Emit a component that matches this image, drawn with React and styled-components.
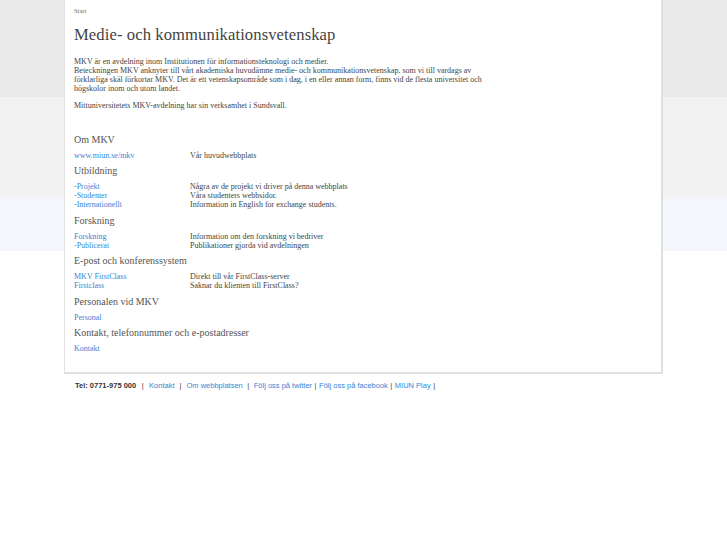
import React from "react";
import styled, { createGlobalStyle } from "styled-components";

const Global = createGlobalStyle`
  html, body { margin: 0; padding: 0; background: #fff; }
  body { font-family: "Liberation Serif", "Times New Roman", serif; }
`;

const Page = styled.div`
  min-height: 545px;
  background: linear-gradient(
    to bottom,
    #e9e9e9 0px, #e9e9e9 97px,
    #f2f2f2 97px, #f2f2f2 197px,
    #f3f6fa 197px, #f3f6fa 251px,
    #ffffff 251px
  );
  padding-left: 64px;
`;

const Wrap = styled.div`
  width: 599px;
`;

const Container = styled.div`
  background: #fff;
  border-left: 1px solid #e2e2e2;
  border-right: 2px solid #e0e0e0;
  border-bottom: 2px solid #e0e0e0;
  box-sizing: border-box;
  height: 374px;
  padding: 7px 10px 0 9px;
  color: #444;
`;

const Crumb = styled.div`
  font-size: 6.5px;
  line-height: 8px;
  color: #666;
`;

const Title = styled.h1`
  margin: 9px 0 0 0;
  font-size: 16.6px;
  font-weight: normal;
  line-height: 22px;
  color: #444;
  letter-spacing: 0.1px;
`;

const Para = styled.p`
  margin: ${(p) => p.$top || 0}px 0 0 0;
  width: 420px;
  font-size: 8px;
  line-height: 9px;
  color: #444;
`;

const Heading = styled.h2`
  margin: ${(p) => p.$top || 4.5}px 0 0 0;
  font-size: 10px;
  font-weight: normal;
  line-height: 13px;
  color: #555;
`;

const LinkTable = styled.div`
  display: grid;
  grid-template-columns: 116px auto;
  margin-top: 5px;
  font-size: 8px;
  line-height: 9px;
`;

const A = styled.a`
  color: #3a84d6;
  text-decoration: none;
`;

const Desc = styled.span`
  color: #444;
`;

const Footer = styled.div`
  display: flex;
  align-items: center;
  padding: 7px 0 0 11px;
  font-family: "Liberation Sans", Arial, sans-serif;
  font-size: 7.5px;
  line-height: 9px;
  color: #444;
`;

const Tel = styled.b`
  color: #333;
`;

const FLink = styled.a`
  color: #3a84d6;
  text-decoration: none;
`;

const Sep = styled.span`
  margin: 0 ${(p) => p.$gap || 5}px;
  color: #444;
`;

const sections = [
  { h: "Om MKV", top: 22.5, rows: [["www.miun.se/mkv", "Vår huvudwebbplats"]] },
  {
    h: "Utbildning",
    rows: [
      ["-Projekt", "Några av de projekt vi driver på denna webbplats"],
      ["-Studenter", "Våra studenters webbsidor."],
      ["-Internationellt", "Information in English for exchange students."],
    ],
  },
  {
    h: "Forskning",
    rows: [
      ["Forskning", "Information om den forskning vi bedriver"],
      ["-Publicerat", "Publikationer gjorda vid avdelningen"],
    ],
  },
  {
    h: "E-post och konferenssystem",
    rows: [
      ["MKV FirstClass", "Direkt till vår FirstClass-server"],
      ["Firstclass", "Saknar du klienten till FirstClass?"],
    ],
  },
  { h: "Personalen vid MKV", rows: [["Personal", ""]] },
  { h: "Kontakt, telefonnummer och e-postadresser", rows: [["Kontakt", ""]] },
];

export default function App() {
  return (
    <>
      <Global />
      <Page>
        <Wrap>
          <Container>
            <Crumb>Start</Crumb>
            <Title>Medie- och kommunikationsvetenskap</Title>
            <Para $top={11}>
              MKV är en avdelning inom Institutionen för informationsteknologi och medier.
              <br />
              Beteckningen MKV anknyter till vårt akademiska huvudämne medie- och kommunikationsvetenskap, som vi till vardags av förklarliga skäl förkortar MKV. Det är ett vetenskapsområde som i dag, i en eller annan form, finns vid de flesta universitet och högskolor inom och utom landet.
            </Para>
            <Para $top={8}>Mittuniversitetets MKV-avdelning har sin verksamhet i Sundsvall.</Para>
            {sections.map((s) => (
              <React.Fragment key={s.h}>
                <Heading $top={s.top}>{s.h}</Heading>
                <LinkTable>
                  {s.rows.map(([l, d]) => (
                    <React.Fragment key={l}>
                      <A href="#">{l}</A>
                      <Desc>{d}</Desc>
                    </React.Fragment>
                  ))}
                </LinkTable>
              </React.Fragment>
            ))}
          </Container>
          <Footer>
            <Tel>Tel: 0771-975 000</Tel>
            <Sep $gap={5.5}>|</Sep>
            <FLink href="#">Kontakt</FLink>
            <Sep $gap={5}>|</Sep>
            <FLink href="#">Om webbplatsen</FLink>
            <Sep $gap={4.5}>|</Sep>
            <FLink href="#">Följ oss på twitter</FLink>
            <Sep $gap={2.5}>|</Sep>
            <FLink href="#">Följ oss på facebook</FLink>
            <Sep $gap={2.5}>|</Sep>
            <FLink href="#">MIUN Play</FLink>
            <Sep $gap={2.5}>|</Sep>
          </Footer>
        </Wrap>
      </Page>
    </>
  );
}
